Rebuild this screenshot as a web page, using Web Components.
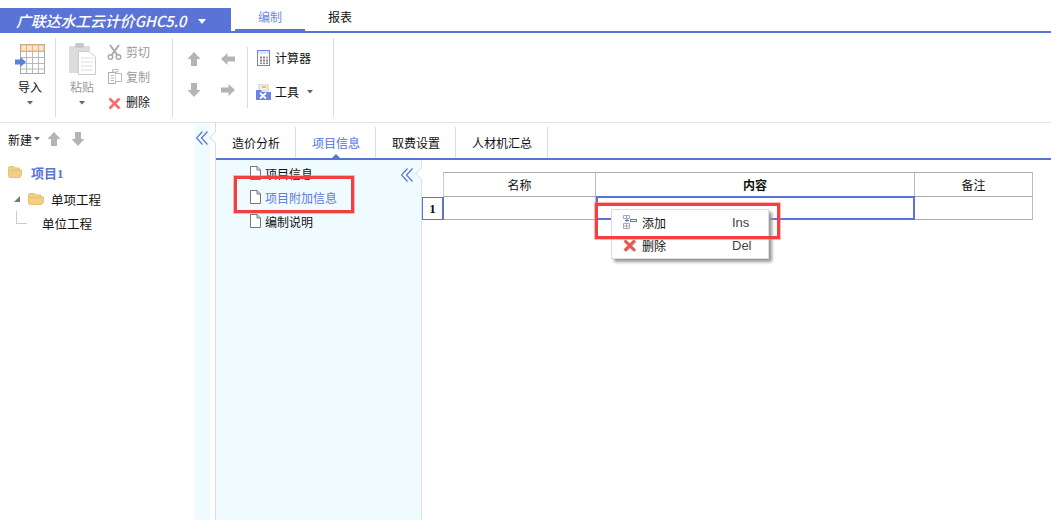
<!DOCTYPE html>
<html lang="zh">
<head>
<meta charset="utf-8">
<title>广联达水工云计价</title>
<style>
    html, body { margin: 0; height: 100%; background: #fff; overflow: hidden; }
    body { font: 12px "Noto Sans CJK SC", "Liberation Sans", sans-serif; color: #111; }
</style>
</head>
<body>
<gl-app></gl-app>

<script>
const ICONS = {
    up: '<svg width="14" height="16" viewBox="0 0 14 16"><path d="M7 1 13.500 8H10v7H4V8H.5z" fill="#b4b4b4"/></svg>',
    down: '<svg width="14" height="16" viewBox="0 0 14 16"><path d="M7 15 13.500 8H10V1H4v7H.5z" fill="#b4b4b4"/></svg>',
    left: '<svg width="14" height="12" viewBox="0 0 14 12"><path d="M0 6 6.500 0v3.500H14v5H6.500V12z" fill="#b4b4b4"/></svg>',
    right: '<svg width="14" height="12" viewBox="0 0 14 12"><path d="M14 6 7.500 0v3.500H0v5h7.500V12z" fill="#b4b4b4"/></svg>',
    caret: '<svg width="6" height="4" viewBox="0 0 6 4"><path d="M0 0h6L3 3.500z" fill="#666"/></svg>',
    x: '<svg width="13" height="13" viewBox="0 0 13 13"><path d="M1.500 1.500 11.500 11.500M11.500 1.500 1.500 11.500" stroke="#f66f6f" stroke-width="2.800" fill="none"/></svg>',
    xMenu: '<svg width="14" height="13" viewBox="0 0 14 13"><path d="M2.500 2 12.500 12M12.500 2 2.500 12" stroke="#8a6a6a" stroke-opacity=".6" stroke-width="2.600" fill="none"/><path d="M1.500 1.500 11.500 11.500M11.500 1.500 1.500 11.500" stroke="#ea5650" stroke-width="2.800" fill="none"/></svg>',
    page: '<svg width="11" height="14" viewBox="0 0 11 14"><path d="M.5.500H7L10.500 4V13.500H.5z" fill="#fff" stroke="#777"/><path d="M7 .5V4H10.500" fill="none" stroke="#777"/></svg>',
    folder: (w) => `<svg width="${w}" height="12" viewBox="0 0 16 12" preserveAspectRatio="none"><path d="M.5 1.500 1.500 .5H6.500L8 2H13V4H15.500V9L13.500 11.500H1.500L.5 10.500z" fill="#f1d084" stroke="#e3c06e"/><path d="M2 4.500H13" stroke="#e3c06e"/></svg>`,
    collapse: '<svg width="12" height="14" viewBox="0 0 12 14"><path d="M6.500.5.500 7l6 6.500M11.500.5 5.500 7l6 6.500" fill="none" stroke="#5a73d6" stroke-width="1.200"/></svg>'
};

class GlApp extends HTMLElement {
    constructor() {
        super();
        this.attachShadow({ mode: 'open' });
        this.shadowRoot.innerHTML = `
            <style>
                :host { display: flex; flex-direction: column; height: 520px; }
                .body { display: flex; flex: 1; min-height: 0; }
            </style>
            <gl-titlebar></gl-titlebar>
            <gl-ribbon></gl-ribbon>
            <div class="body">
                <gl-tree></gl-tree>
                <gl-strip></gl-strip>
                <gl-workspace></gl-workspace>
            </div>
        `;
    }
}

class GlTitlebar extends HTMLElement {
    constructor() {
        super();
        this.attachShadow({ mode: 'open' });
        this.shadowRoot.innerHTML = `
            <style>
                :host { display: flex; height: 33px; box-sizing: border-box; padding-top: 8px; border-bottom: 2px solid #5a73d6; }
                .title {
                    width: 231px; height: 25px; margin-bottom: -2px; box-sizing: border-box; padding-left: 16px;
                    display: flex; align-items: center; gap: 12px;
                    background: #5a73d6; color: #fff; font-size: 15px; font-style: italic; font-weight: 500; letter-spacing: -.2px;
                }
                .title svg { margin-top: 1px; }
                .tab { width: 70px; margin-left: 4px; text-align: center; line-height: 18px; height: 23px; box-sizing: border-box; }
                .on { color: #6f86e6; margin-bottom: -2px; height: 25px; border-bottom: 4px solid #5a73d6; }
                .second { margin-left: 0; color: #111; }
            </style>
            <div class="title"><span>广联达水工云计价GHC5.0</span>
                <svg width="8" height="5" viewBox="0 0 8 5"><path d="M0 0h8L4 5z" fill="#fff"/></svg></div>
            <div class="tab on">编制</div>
            <div class="tab second">报表</div>
        `;
    }
}

class GlTool extends HTMLElement {
    // small icon + label row used inside the ribbon groups
    constructor() {
        super();
        this.attachShadow({ mode: 'open' });
        this.shadowRoot.innerHTML = `
            <style>
                :host { display: flex; align-items: center; gap: 4px; height: 25px; white-space: nowrap; }
                :host([disabled]) { color: #9a9a9a; }
                .ico { display: flex; width: 15px; justify-content: center; }
            </style>
            <span class="ico"><slot name="icon"></slot></span><slot></slot>
        `;
    }
}

class GlRibbon extends HTMLElement {
    constructor() {
        super();
        this.attachShadow({ mode: 'open' });
        this.shadowRoot.innerHTML = `
            <style>
                :host { display: flex; height: 90px; box-sizing: border-box; padding-top: 5px; border-bottom: 1px solid #e4e4e4; }
                .group { height: 79px; border-right: 1px solid #dcdcdc; display: flex; flex: none; }
                .big { display: flex; flex-direction: column; align-items: center; flex: none; }
                .big svg.main { display: block; }
                .big span { line-height: 16px; }
                .big .c { display: flex; margin-top: 6px; }
                .import { width: 55px; }
                .import .big { width: 60px; padding-top: 6px; box-sizing: border-box; }
                .import span { margin-top: 5px; }
                .clip { width: 116px; }
                .clip .big { width: 50px; margin-left: 1px; padding-top: 6px; color: #9a9a9a; }
                .clip span { margin-top: 4px; }
                .list { display: flex; flex-direction: column; padding-top: 1px; }
                .nav { width: 160px; }
                .arrows { width: 74px; display: grid; grid-template-columns: 34px 34px; grid-auto-rows: 31px; justify-items: center; align-items: center; padding: 5px 0 0 4px; box-sizing: border-box; height: 79px; align-content: start; flex: none; }
                .tools { flex: 1; border-left: 1px solid #dcdcdc; margin: 9px 0; display: flex; flex-direction: column; padding-left: 8px; gap: 9px; }
                .tools gl-tool:first-child { margin-top: -2px; }
                .tools .c { margin-left: 4px; display: flex; }
            </style>
            <div class="group import">
                <div class="big">
                    <svg class="main" width="32" height="30" viewBox="0 0 32 30">
                        <rect x="6.500" y=".5" width="24" height="29" fill="#fff" stroke="#aaa"/>
                        <rect x="7" y="1" width="23" height="6" fill="#fbe6cf"/>
                        <path d="M7 7.500H30M7 13.500H30M7 19.500H30M7 25H30M12.500 1V29M18.500 1V29M24.500 1V29" stroke="#b8b8b8" fill="none"/>
                        <path d="M7 1H30V7H7zM12.500 1V7M18.500 1V7M24.500 1V7" fill="none" stroke="#eeb26f"/>
                        <path d="M1 15.500H6.500V13L12 18 6.500 23V20.500H1z" fill="#5a7fe0"/>
                    </svg>
                    <span>导入</span>
                    <div class="c">${ICONS.caret}</div>
                </div>
            </div>
            <div class="group clip">
                <div class="big">
                    <svg class="main" width="27" height="32" viewBox="0 0 27 32" style="margin-top:-1px">
                        <rect y="3" width="21" height="27" fill="#dcdcdc"/>
                        <rect x="6" y="0" width="9" height="5" rx="2" fill="#c8c8c8"/>
                        <path d="M9.500 8.500H20L26.500 14V31.500H9.500z" fill="#fff" stroke="#ccc"/>
                        <path d="M12 15H24M12 19H24M12 23H24M12 27H24" stroke="#ddd"/>
                    </svg>
                    <span>粘贴</span>
                    <div class="c">${ICONS.caret}</div>
                </div>
                <div class="list">
                    <gl-tool disabled><svg slot="icon" width="15" height="16" viewBox="0 0 15 16"><path d="M3 1 11 12M12 1 4 12" stroke="#aaa" stroke-width="2" fill="none"/><circle cx="3.500" cy="13" r="2.300" fill="#fff" stroke="#aaa" stroke-width="1.500"/><circle cx="11.500" cy="13" r="2.300" fill="#fff" stroke="#aaa" stroke-width="1.500"/></svg>剪切</gl-tool>
                    <gl-tool disabled><svg slot="icon" width="14" height="15" viewBox="0 0 14 15"><path d="M4.500.5H10V3H4.500z" fill="#fff" stroke="#bbb"/><path d="M.5 3.500H7.500V14.500H.5z" fill="#fff" stroke="#aaa"/><path d="M7.500 4.500H13.500V12.500H7.500" fill="#fff" stroke="#bbb"/><path d="M2.500 6.500H6M2.500 9H6M2.500 11.500H6" stroke="#bbb"/></svg>复制</gl-tool>
                    <gl-tool><span slot="icon" style="display:flex">${ICONS.x}</span>删除</gl-tool>
                </div>
            </div>
            <div class="group nav">
                <div class="arrows">${ICONS.up}${ICONS.left}${ICONS.down}${ICONS.right}</div>
                <div class="tools">
                    <gl-tool><svg slot="icon" width="13" height="16" viewBox="0 0 13 16"><rect x=".5" y=".5" width="12" height="15" fill="#fff" stroke="#6d84e4"/><rect x="1" y="1" width="11" height="3" fill="#dfe5fb"/><path d="M3 6.500H5V8.500H3zM6 6.500H8V8.500H6zM3 9.500H5V11.500H3zM6 9.500H8V11.500H6zM3 12.500H5V14H3zM6 12.500H8V14H6zM9 9.500H11V11.500H9zM9 12.500H11V14H9z" fill="#888"/><path d="M9 6.500H11V8.500H9z" fill="#f08a8a"/></svg>计算器</gl-tool>
                    <gl-tool><svg slot="icon" width="15" height="16" viewBox="0 0 15 16"><path d="M3 0H12V7H3z" fill="#eee" stroke="#ccc"/><path d="M6 2H10V4H6z" fill="#f5b85c"/><path d="M0 6H5L6 8H15V16H0z" fill="#6d84e4"/><path d="M4 9 10 14.500M10 9 4 14.500" stroke="#fff" stroke-width="1.800"/></svg>工具<span class="c">${ICONS.caret}</span></gl-tool>
                </div>
            </div>
        `;
    }
}

class GlTree extends HTMLElement {
    constructor() {
        super();
        this.attachShadow({ mode: 'open' });
        this.shadowRoot.innerHTML = `
            <style>
                :host { display: block; width: 195px; flex: none; box-sizing: border-box; padding: 7px 0 0 8px; }
                .bar { display: flex; align-items: center; height: 18px; white-space: nowrap; }
                .bar .c { margin: 0 7px 0 2px; display: flex; }
                .bar .d { margin-left: 10px; display: flex; }
                .row { display: flex; align-items: center; height: 24px; white-space: nowrap; font-size: 12.5px; }
                .root { margin-top: 12px; color: #5a73d6; font-weight: 700; font-family: "Liberation Serif", "Noto Sans CJK SC", serif; gap: 9px; font-size: 13px; }
                .child { margin-top: 3px; padding-left: 6px; }
                .child svg { margin: 0 7px 0 8px; }
                .tri { width: 0; height: 0; border-left: 6px solid transparent; border-bottom: 6px solid #777; }
                .leaf { padding-left: 8px; }
                .leaf i { display: block; width: 10px; height: 12px; margin: -12px 15px 0 0; border-left: 1px solid #ccc; border-bottom: 1px solid #ccc; }
            </style>
            <div class="bar">新建<span class="c">${ICONS.caret}</span>${ICONS.up}<span class="d">${ICONS.down}</span></div>
            <div class="row root">${ICONS.folder(14)}<span>项目1</span></div>
            <div class="row child"><span class="tri"></span>${ICONS.folder(16)}<span>单项工程</span></div>
            <div class="row leaf"><i></i><span>单位工程</span></div>
        `;
    }
}

class GlStrip extends HTMLElement {
    // the pale collapse strip beside the workspace
    constructor() {
        super();
        this.attachShadow({ mode: 'open' });
        this.shadowRoot.innerHTML = `
            <style>
                :host { display: block; width: 15px; margin: 1px 5px 0 0; flex: none; background: #f0fbff; box-sizing: border-box; padding: 7px 0 0 1px; }
                svg { display: block; }
            </style>
            ${ICONS.collapse}
        `;
    }
}

class GlWorkspace extends HTMLElement {
    constructor() {
        super();
        this.attachShadow({ mode: 'open' });
        this.shadowRoot.innerHTML = `
            <style>
                :host { display: flex; flex-direction: column; flex: 1; min-width: 0; border-left: 1px solid #dcdcdc; position: relative; }
                :host::before {
                    content: ""; position: absolute; left: -5px; top: 10px; width: 9px; height: 9px; box-sizing: border-box;
                    background: #fff; border-left: 1px solid #ddd; border-bottom: 1px solid #ddd; transform: rotate(45deg);
                }
                .tabs { display: flex; height: 37px; box-sizing: border-box; padding-top: 4px; border-bottom: 2px solid #5a73d6; flex: none; }
                .tab { padding: 0 15px 0 16px; border-right: 1px solid #dcdcdc; line-height: 32px; white-space: nowrap; position: relative; }
                .tab.on { color: #6f86e6; font-weight: 500; }
                .tab.on::after { content: ""; position: absolute; left: 50%; bottom: 0; margin-left: -4px; border: 4px solid transparent; border-top: 0; border-bottom-color: #5a73d6; }
                .main { display: flex; flex: 1; min-height: 0; }
                .red { position: absolute; border: 3px solid #f33f3f; box-sizing: border-box; box-shadow: 0 0 0 1px rgba(255, 110, 110, .5); pointer-events: none; }
            </style>
            <div class="tabs">
                <div class="tab">造价分析</div>
                <div class="tab on">项目信息</div>
                <div class="tab">取费设置</div>
                <div class="tab">人材机汇总</div>
            </div>
            <div class="main">
                <gl-sidenav></gl-sidenav>
                <gl-grid></gl-grid>
            </div>
            <div class="red" style="left:18px;top:53px;width:120px;height:37px"></div>
            <div class="red" style="left:379px;top:80px;width:185px;height:36px"></div>
        `;
    }
}

class GlSidenav extends HTMLElement {
    constructor() {
        super();
        this.attachShadow({ mode: 'open' });
        const rows = ['项目信息', '项目附加信息', '编制说明'];
        this.shadowRoot.innerHTML = `
            <style>
                :host { display: block; width: 206px; flex: none; box-sizing: border-box; background: #f0fbff; border-right: 1px solid #d9dfe4; padding: 1px 0 0 34px; position: relative; }
                :host::after {
                    content: ""; position: absolute; right: -5px; top: 9px; width: 9px; height: 9px; box-sizing: border-box;
                    background: #fff; border-left: 1px solid #ddd; border-bottom: 1px solid #ddd; transform: rotate(45deg);
                }
                .item { display: flex; align-items: center; gap: 4px; height: 24px; white-space: nowrap; }
                .item.on { color: #5f78dc; }
                .fold { position: absolute; right: 8px; top: 8px; display: flex; }
            </style>
            ${rows.map((r, i) => `<div class="item ${i === 1 ? 'on' : ''}">${ICONS.page}<span>${r}</span></div>`).join('')}
            <div class="fold">${ICONS.collapse}</div>
        `;
    }
}

class GlGrid extends HTMLElement {
    constructor() {
        super();
        this.attachShadow({ mode: 'open' });
        this.shadowRoot.innerHTML = `
            <style>
                :host { display: block; flex: 1; padding-top: 12px; position: relative; }
                .grid { display: grid; grid-template-columns: 21px 153px 319px 118px; grid-template-rows: 25px 23px; width: 611px; }
                .cell { box-sizing: border-box; display: flex; align-items: center; justify-content: center; border-right: 1px solid #bbb; border-bottom: 1px solid #aaa; }
                .hd { border-top: 1px solid #aaa; }
                .hd.first { border-left: 1px solid #ccc; grid-column: 2; }
                .b { font-weight: 700; }
                .num { font: 700 13px "Liberation Serif", serif; border: 1px solid #5a73d6; border-right-width: 2px; margin-right: -1px; position: relative; }
                .sel { border: 2px solid #5a73d6; margin-top: -1px; position: relative; }
            </style>
            <div class="grid">
                <div class="cell hd first">名称</div>
                <div class="cell hd b">内容</div>
                <div class="cell hd">备注</div>
                <div class="cell num">1</div>
                <div class="cell"></div>
                <div class="cell sel"></div>
                <div class="cell"></div>
            </div>
            <gl-menu style="left:189px;top:49px"></gl-menu>
        `;
    }
}

class GlMenu extends HTMLElement {
    constructor() {
        super();
        this.attachShadow({ mode: 'open' });
        this.shadowRoot.innerHTML = `
            <style>
                :host { display: block; position: absolute; width: 158px; height: 50px; box-sizing: border-box; background: #fff; border: 1px solid #ddd; box-shadow: 3px 3px 3px #999; padding-top: 1px; }
                .row { display: flex; align-items: center; height: 23px; padding-left: 11px; white-space: nowrap; }
                .ico { width: 15px; margin-right: 4px; display: flex; }
                .txt { width: 90px; }
                .key { font-family: "Liberation Sans", sans-serif; color: #444; font-size: 13px; }
            </style>
            <div class="row"><span class="ico" style="margin-top:-1px"><svg width="15" height="14" viewBox="0 0 15 14"><path d="M.5.500H6.500V3.500H.5zM3.500.5V3.500M.5 8.500H6.500V13.500H.5zM3.500 8.500V13.500M.5 11H6.500" fill="#fff" stroke="#aaa"/><path d="M2 5.500H6M4 4V7" stroke="#5a73d6"/><rect x="7.500" y="4.500" width="6" height="2" fill="#fff" stroke="#5a73d6"/></svg></span><span class="txt">添加</span><span class="key">Ins</span></div>
            <div class="row"><span class="ico">${ICONS.xMenu}</span><span class="txt">删除</span><span class="key">Del</span></div>
        `;
    }
}

customElements.define('gl-app', GlApp);
customElements.define('gl-titlebar', GlTitlebar);
customElements.define('gl-tool', GlTool);
customElements.define('gl-ribbon', GlRibbon);
customElements.define('gl-tree', GlTree);
customElements.define('gl-strip', GlStrip);
customElements.define('gl-workspace', GlWorkspace);
customElements.define('gl-sidenav', GlSidenav);
customElements.define('gl-grid', GlGrid);
customElements.define('gl-menu', GlMenu);
</script>
</body>
</html>
